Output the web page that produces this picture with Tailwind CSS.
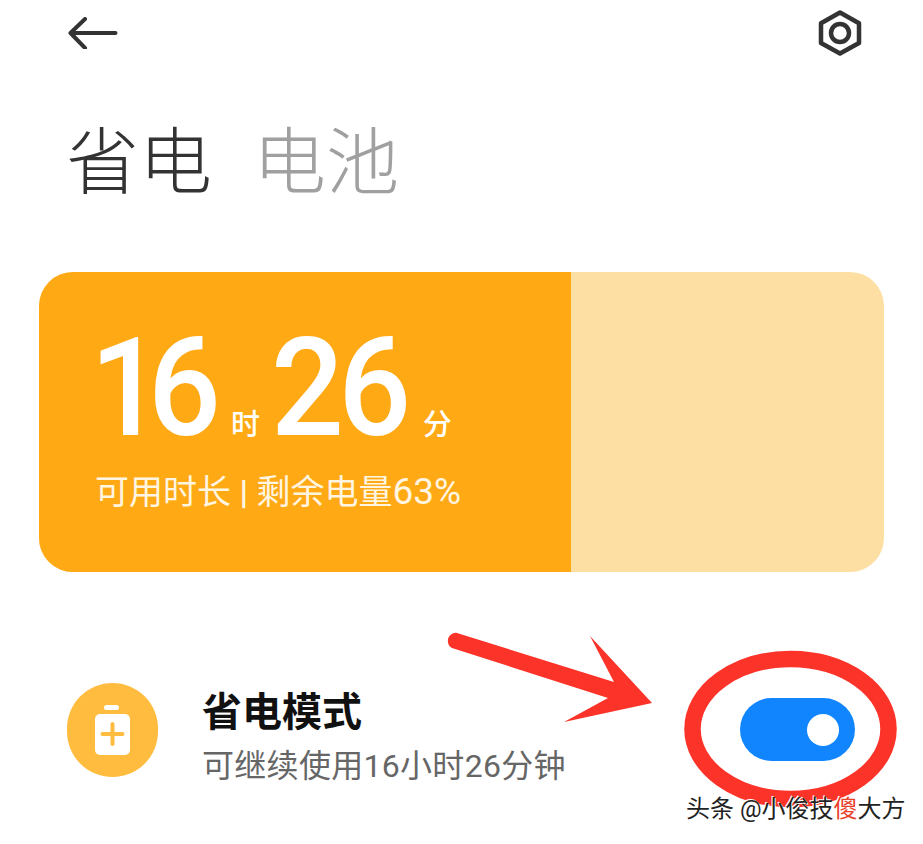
<!DOCTYPE html>
<html lang="zh-CN">
<head>
    <meta charset="UTF-8">
    <meta name="viewport" content="width=device-width, initial-scale=1.0">
    <title>省电</title>
    <script src="https://cdn.jsdelivr.net/npm/@tailwindcss/browser@4"></script>
</head>
<body class="bg-white">
    <div class="relative w-[923px] h-[844px] overflow-hidden bg-white font-['Roboto','Noto_Sans_CJK_SC',sans-serif]">
        <!-- top bar -->
        <div class="flex items-start justify-between pl-[68px] pr-[61px] pt-[10px] h-[113px]">
            <svg class="mt-[7px]" width="50" height="32" viewBox="0 0 50 32" fill="none" stroke="#333" stroke-width="4" stroke-linecap="round" stroke-linejoin="round">
                <path d="M47.500 16H2.500M17 2 2.500 16 17 31"/>
            </svg>
            <svg width="44" height="46" viewBox="0 0 44 46" fill="none" stroke="#333" stroke-width="4.500" stroke-linejoin="round">
                <path d="M22 2.500 41 13.200V33L22 43.500 3 33V13.200Z"/>
                <circle cx="22" cy="23" r="9"/>
            </svg>
        </div>

        <!-- title tabs -->
        <div class="flex gap-[41px] pl-[66px] h-[97px] text-[73px] leading-[100px] font-light">
            <span class="text-[#333]">省电</span>
            <span class="text-[#a0a0a0]">电池</span>
        </div>

        <!-- battery card -->
        <div class="mx-[39px] mt-[62px] h-[300px] rounded-[34px] overflow-hidden bg-[#fddea3] w-[845px]">
            <div class="w-[532px] h-full bg-[#ffa914] pl-[57px] pt-[48px] text-white">
                <div class="flex items-baseline h-[136px] ml-[-6px]">
                    <span class="inline-block origin-left scale-x-[0.93] text-[138px] leading-[136px] font-medium tracking-[-16px]">16</span>
                    <span class="text-[29px] ml-[16px] font-medium">时</span>
                    <span class="inline-block origin-left scale-x-[0.93] text-[138px] leading-[136px] font-medium tracking-[-6px] ml-[11px]">26</span>
                    <span class="text-[29px] ml-[7px] font-medium">分</span>
                </div>
                <div class="mt-[14px] ml-[-1px] text-[34px] leading-[44px] text-[#fff5e0]">可用时长 <span class="font-bold">|</span> 剩余电量<span class="text-[37px]">63%</span></div>
            </div>
        </div>

        <!-- power saving row -->
        <div class="flex items-start pl-[67px] mt-[111px] h-[94px]">
            <div class="flex items-center justify-center w-[91px] h-[94px] rounded-full bg-[#ffbc3f]">
                <svg width="35" height="50" viewBox="0 0 35 50">
                    <rect x="9" y="0" width="15" height="5" rx="2.500" fill="#fff"/>
                    <rect x="0" y="9" width="35" height="41" rx="5" fill="#fff"/>
                    <path d="M17.500 19V39M7.500 29H27.500" stroke="#ffbc3f" stroke-width="4" stroke-linecap="round"/>
                </svg>
            </div>
            <div class="ml-[44px] mt-[4px]">
                <div class="text-[40px] leading-[52px] font-bold text-[#111]">省电模式</div>
                <div class="mt-[4px] text-[32px] leading-[46px] tracking-[0.3px] text-[#666]">可继续使用16小时26分钟</div>
            </div>
        </div>

        <!-- toggle -->
        <div class="absolute left-[740px] top-[698px] w-[115px] h-[63px] rounded-full bg-[#1085fe]">
            <div class="absolute left-[67px] top-[16px] w-[32px] h-[32px] rounded-full bg-white"></div>
        </div>

        <!-- red annotation -->
        <svg class="absolute left-0 top-0 pointer-events-none" width="923" height="844" viewBox="0 0 923 844" fill="none">
            <ellipse cx="790.500" cy="729" rx="98" ry="70" stroke="#fb3329" stroke-width="16.500"/>
            <path d="M590 636 614 682 457 633C452 632 447 637 448 642 448 645 450 647 452 648L608 698 564 722 652 703Z" fill="#fb3329"/>
        </svg>

        <!-- watermark -->
        <div class="absolute left-[686px] top-[794px] text-[24px] leading-[30px] whitespace-nowrap text-[#222] [text-shadow:1px_1px_0_#fff,-1px_-1px_0_#fff]">头条 @小俊技<span class="text-[#e8402a]">傻</span>大方</div>
    </div>
</body>
</html>
